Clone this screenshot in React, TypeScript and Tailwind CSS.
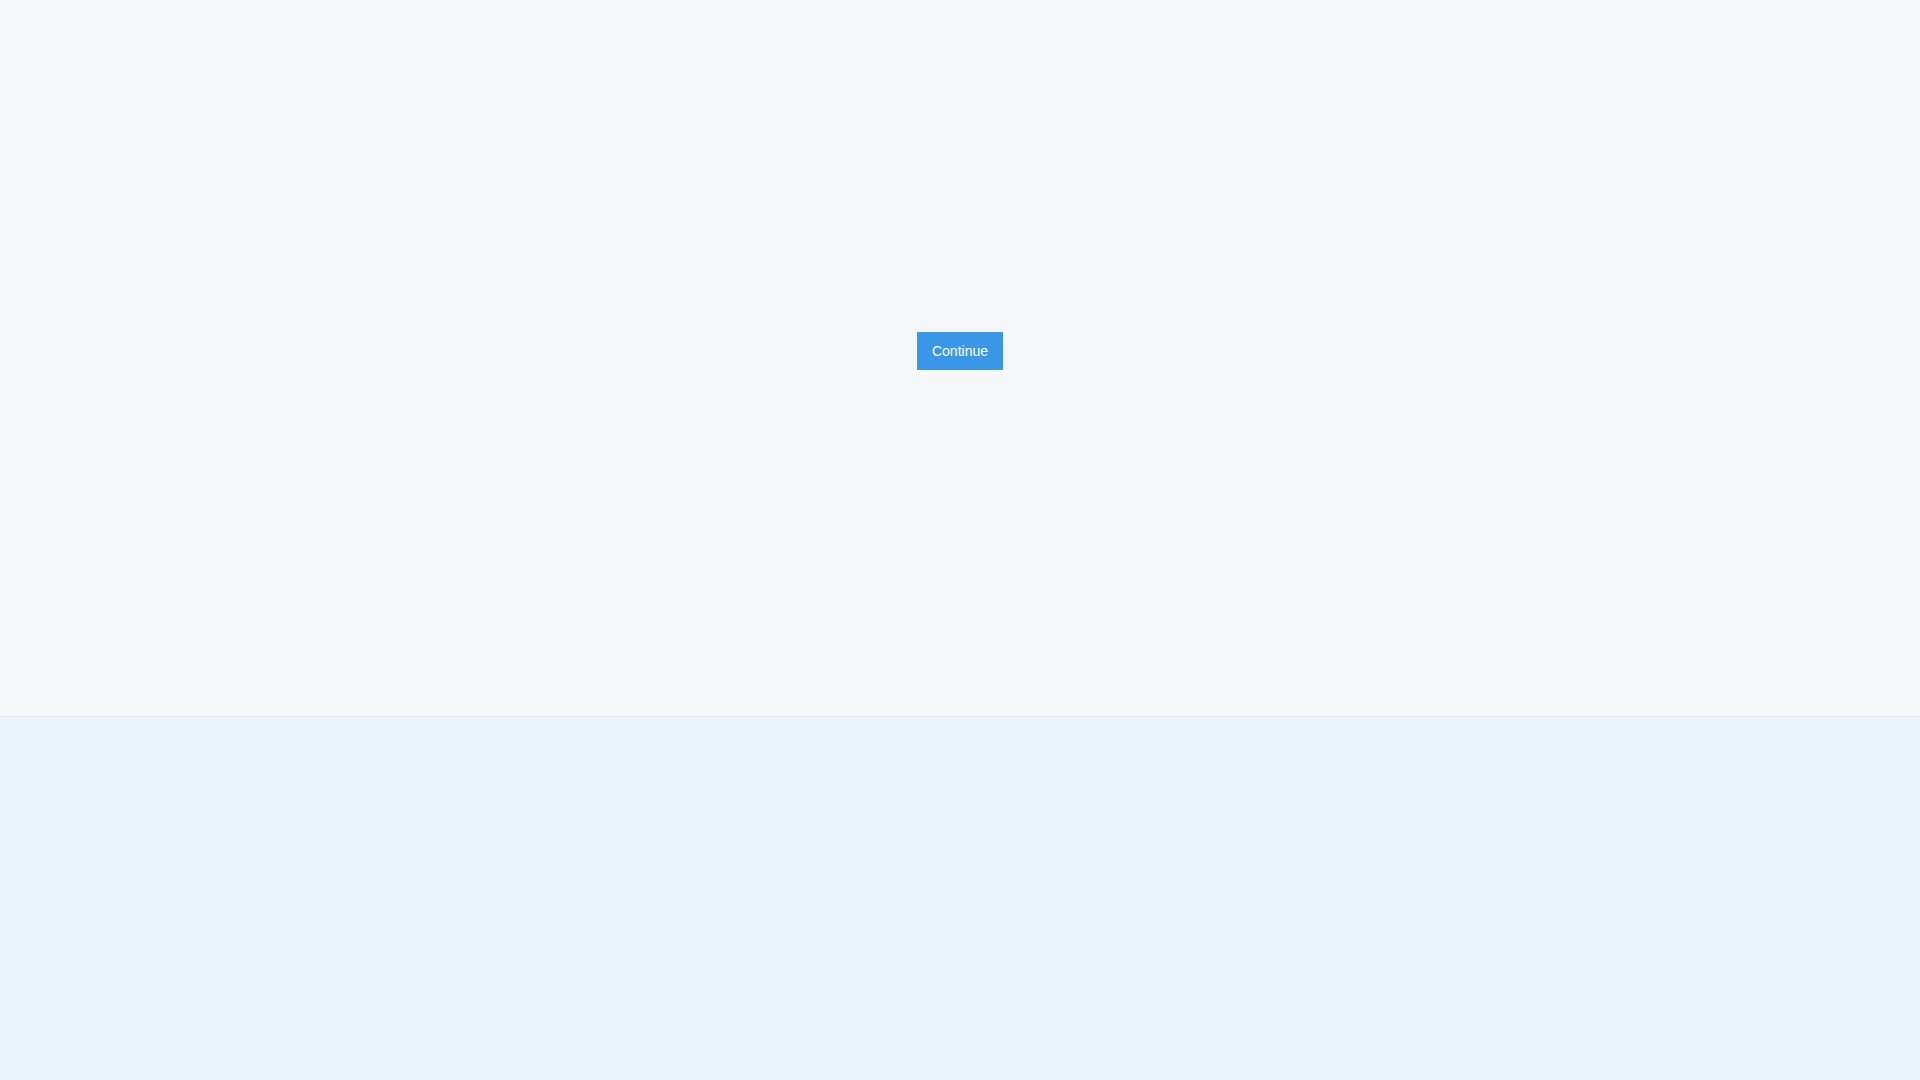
export default function App() {
  return (
    <div
      className="flex flex-col min-h-screen"
      style={{ fontFamily: '"Liberation Sans", Arial, sans-serif' }}
    >
      {/* 上部区域 */}
      <div className="h-[717px] flex justify-center pt-[332px] bg-[#f5f7fb] border-b border-[#e2e7ef]">
        <button className="h-[38px] w-[86px] bg-[#3a97e8] text-white text-[14px] leading-none">
          Continue
        </button>
      </div>
      {/* 下部区域 */}
      <div className="flex-1 bg-[#ebf3fb]" />
    </div>
  )
}
